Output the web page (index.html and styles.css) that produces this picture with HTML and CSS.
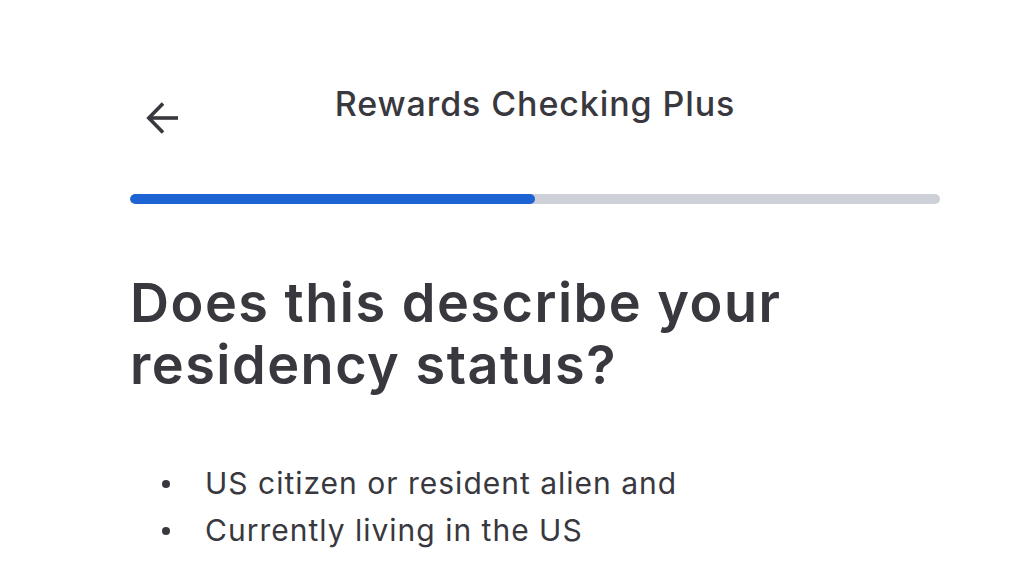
FILE: index.html
```html
<!DOCTYPE html>
<html>
<head>
<meta charset="utf-8">
<link rel="stylesheet" href="styles.css">
</head>
<body>
<div class="page">
  <header class="topbar">
    <button class="back" aria-label="Back">
      <svg width="34" height="34" viewBox="0 0 34 34" fill="none" stroke="#38383e" stroke-width="3.6" stroke-linecap="butt" stroke-linejoin="miter">
        <path d="M33 17H4"/>
        <path d="M18 2.5L3.8 17L18 31.5"/>
      </svg>
    </button>
    <h1 class="title">Rewards Checking Plus</h1>
  </header>
  <div class="progress"><div class="progress-fill" style="width: 50%"></div></div>
  <h2 class="question">Does this describe your residency status?</h2>
  <ul class="list">
    <li>US citizen or resident alien and</li>
    <li>Currently living in the US</li>
  </ul>
</div>
</body>
</html>
```

FILE: styles.css
```css
html, body {
  margin: 0;
  padding: 0;
  background: #ffffff;
}
body {
  font-family: Inter, "Noto Sans", sans-serif;
  color: #38383e;
}
.page {
  margin-left: 130px;
  width: 810px;
  padding-top: 84px;
}
.topbar {
  position: relative;
  height: 60px;
  display: flex;
  justify-content: center;
}
.back {
  position: absolute;
  left: 15px;
  top: 17px;
  background: none;
  border: 0;
  padding: 0;
  width: 34px;
  height: 34px;
  cursor: pointer;
}
.back svg { display: block; }
.title {
  margin: 0;
  font-size: 34px;
  font-weight: 500;
  line-height: 40px;
  letter-spacing: 0.9px;
}
.progress {
  margin-top: 50px;
  height: 10px;
  border-radius: 5px;
  background: #cdd0d8;
  overflow: hidden;
}
.progress-fill {
  height: 100%;
  background: #1d63d4;
  border-radius: 5px;
}
.question {
  margin: 68px 0 0;
  font-size: 54px;
  font-weight: 600;
  line-height: 62px;
  letter-spacing: 1.5px;
  width: 740px;
}
.list {
  margin: 64px 0 0;
  padding: 0;
  list-style: none;
  font-size: 30px;
  line-height: 47px;
  letter-spacing: 1px;
}
.list li {
  display: flex;
  align-items: center;
}
.list li::before {
  content: "";
  width: 8px;
  height: 8px;
  border-radius: 50%;
  background: #38383e;
  margin-left: 32px;
  margin-right: 35px;
  flex: none;
}
```
